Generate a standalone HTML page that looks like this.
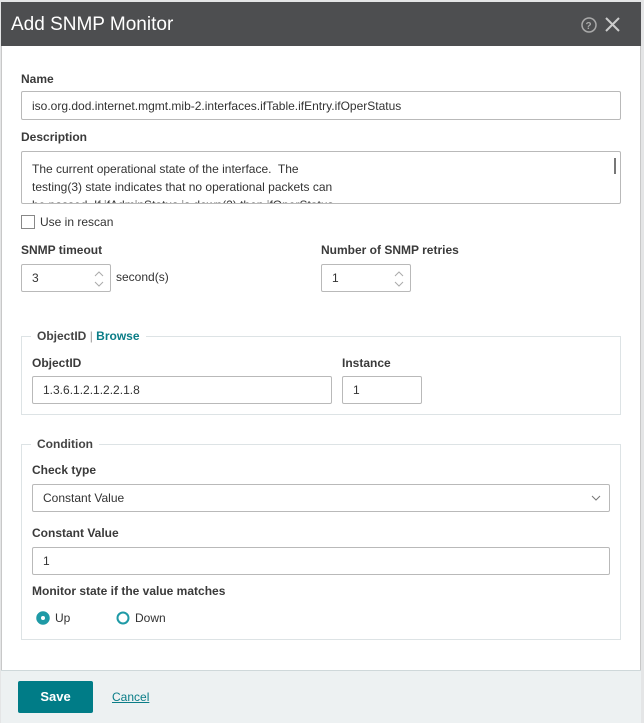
<!DOCTYPE html>
<html><head><style>
*{box-sizing:border-box;margin:0;padding:0}
body{width:644px;height:723px;background:#e4e5e6;font-family:"Liberation Sans",sans-serif;font-size:12px;color:#333;position:relative;overflow:hidden}
.a{position:absolute}
.dlg{left:1px;top:2px;width:640px;height:721px;background:#fff;border:1px solid #c8c8c8}
.hdr{left:1px;top:2px;width:640px;height:44px;background:#4d4e50;color:#fff;font-size:19px;padding:12px 10px}
.lbl{font-weight:bold;font-size:12px;color:#3a3a3a}
.in{border:1px solid #b9b9b9;border-radius:2px;background:#fff;font-size:12px;color:#333;padding:0 10px;display:flex;align-items:center}
.fs{border:1px solid #dde3e5}
.leg{background:#fff;padding:0 6px;font-weight:bold;color:#444}
.spin{position:absolute;right:6px;top:6px}
</style></head><body>
<div class="a dlg"></div>
<div class="a hdr">Add SNMP Monitor</div>
<svg class="a" style="left:579px;top:16px" width="50" height="20"><circle cx="10" cy="9" r="7" fill="none" stroke="#aaa" stroke-width="1.5"/><text x="6.5" y="13" fill="#aaa" font-size="10" font-family="Liberation Sans" font-weight="bold">?</text><path d="M27 2L40 15M40 2L27 15" stroke="#ccc" stroke-width="2"/></svg>

<div class="a lbl" style="left:21px;top:72px">Name</div>
<div class="a in" style="left:21px;top:91px;width:600px;height:29px">iso.org.dod.internet.mgmt.mib-2.interfaces.ifTable.ifEntry.ifOperStatus</div>
<div class="a lbl" style="left:21px;top:130px">Description</div>
<div class="a in" style="left:21px;top:151px;width:600px;height:53px;display:block;overflow:hidden;padding-top:8px;line-height:18px">The current operational state of the interface.&nbsp; The<br>testing(3) state indicates that no operational packets can<br>be passed. If ifAdminStatus is down(2) then ifOperStatus</div>
<div class="a" style="left:614px;top:158px;width:2px;height:16px;background:#777"></div>
<div class="a" style="left:21px;top:215px;width:14px;height:14px;border:1px solid #888"></div>
<div class="a" style="left:40px;top:215px">Use in rescan</div>

<div class="a lbl" style="left:21px;top:243px">SNMP timeout</div>
<div class="a in" style="left:21px;top:264px;width:90px;height:28px">3<svg class="spin" width="10" height="16"><path d="M1 5L5 1L9 5M1 11L5 15L9 11" stroke="#aaa" fill="none"/></svg></div>
<div class="a" style="left:116px;top:270px">second(s)</div>
<div class="a lbl" style="left:321px;top:243px">Number of SNMP retries</div>
<div class="a in" style="left:321px;top:264px;width:90px;height:28px">1<svg class="spin" width="10" height="16"><path d="M1 5L5 1L9 5M1 11L5 15L9 11" stroke="#aaa" fill="none"/></svg></div>

<div class="a fs" style="left:21px;top:336px;width:600px;height:79px"></div>
<div class="a leg" style="left:31px;top:329px">ObjectID <span style="color:#999;font-weight:normal">|</span> <span style="color:#0a7d87">Browse</span></div>
<div class="a lbl" style="left:32px;top:356px">ObjectID</div>
<div class="a in" style="left:32px;top:376px;width:300px;height:28px">1.3.6.1.2.1.2.2.1.8</div>
<div class="a lbl" style="left:342px;top:356px">Instance</div>
<div class="a in" style="left:342px;top:376px;width:80px;height:28px">1</div>

<div class="a fs" style="left:21px;top:444px;width:600px;height:196px"></div>
<div class="a leg" style="left:31px;top:437px">Condition</div>
<div class="a lbl" style="left:32px;top:463px">Check type</div>
<div class="a in" style="left:32px;top:484px;width:578px;height:28px">Constant Value<svg style="position:absolute;right:8px;top:10px" width="10" height="7"><path d="M1 1L5 5L9 1" stroke="#777" fill="none"/></svg></div>
<div class="a lbl" style="left:32px;top:526px">Constant Value</div>
<div class="a in" style="left:32px;top:547px;width:578px;height:28px">1</div>
<div class="a lbl" style="left:32px;top:584px">Monitor state if the value matches</div>
<svg class="a" style="left:35px;top:610px" width="100" height="16"><circle cx="8" cy="8" r="6" fill="#1f9aa6" stroke="#1f9aa6" stroke-width="1.5"/><circle cx="8" cy="8" r="2" fill="#fff"/><circle cx="88" cy="8" r="5.5" fill="none" stroke="#1f9aa6" stroke-width="2"/></svg>
<div class="a" style="left:55px;top:611px">Up</div>
<div class="a" style="left:135px;top:611px">Down</div>

<div class="a" style="left:1px;top:670px;width:640px;height:53px;background:#edf1f2;border-top:1px solid #cfd8da"></div>
<div class="a" style="left:18px;top:681px;width:75px;height:32px;background:#007c87;border-radius:2px;color:#fff;font-weight:bold;font-size:13px;text-align:center;line-height:32px">Save</div>
<div class="a" style="left:112px;top:690px;color:#0a7d87;text-decoration:underline">Cancel</div>
</body></html>
